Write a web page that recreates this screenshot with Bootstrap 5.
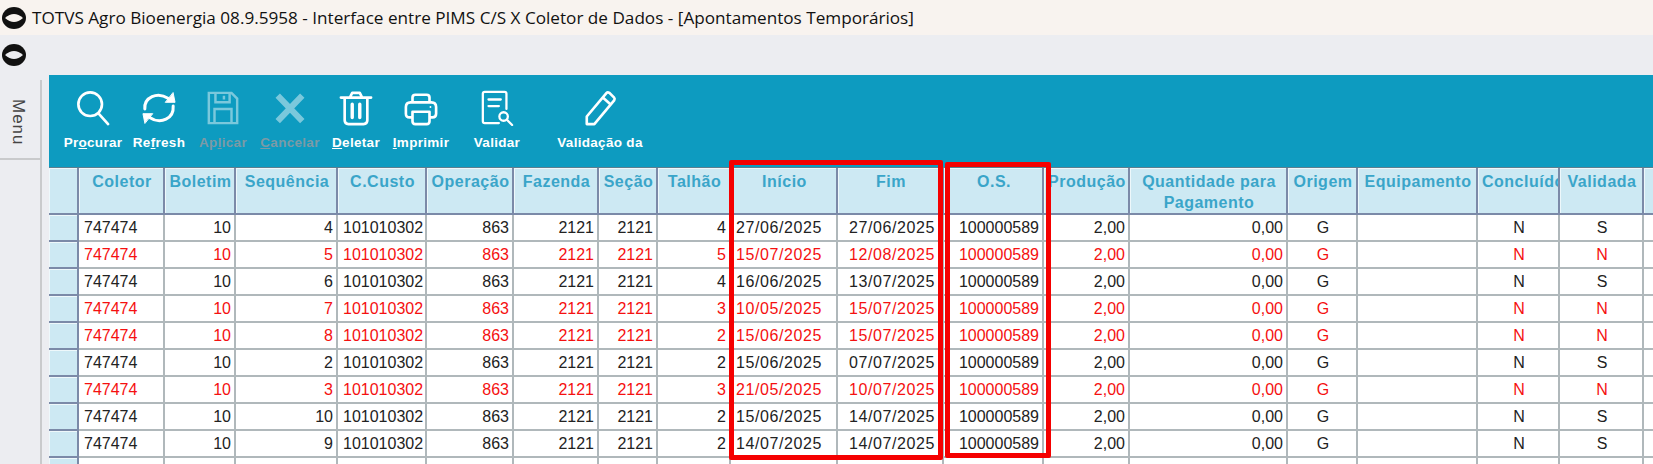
<!DOCTYPE html>
<html lang="pt-BR">
<head>
<meta charset="UTF-8">
<title>Apontamentos Temporários</title>
<link href="https://cdn.jsdelivr.net/npm/bootstrap@5.3.0/dist/css/bootstrap.min.css" rel="stylesheet">
<script src="https://cdn.jsdelivr.net/npm/bootstrap@5.3.0/dist/js/bootstrap.bundle.min.js"></script>
<style>
html, body { height: 464px; overflow: hidden; }
body { background: #ecedf1; font-family: "Liberation Sans", sans-serif; }
.app-frame { width: 1653px; height: 464px; position: relative; overflow: hidden; }
.title-bar { height: 35px; background: #f8f3ef; padding-left: 2px; gap: 6px; }
.title-text { font-family: "Open Sans", sans-serif; font-size: 17.15px; color: #111; white-space: nowrap; }
.sub-bar { height: 40px; padding-left: 2px; }
.work-area { height: 389px; }
.side-tab { width: 49px; flex: none; }
.side-inner { width: 42px; height: 80px; padding-right: 4px; border-right: 2px solid #c9cacc; border-bottom: 2px solid #c9cacc; margin-top: 5px; }
.side-label { writing-mode: vertical-rl; font-size: 17px; color: #444; letter-spacing: 1px; margin-top: 19px; }
.side-line { width: 42px; border-right: 2px solid #c9cacc; flex: 1; }
.main-col { width: 1604px; flex: none; }
.tool-strip { height: 93px; background: #0d9bc0; border-bottom: 1px solid #5d7f8f; padding-left: 11px; }
.tool-btn { flex: none; color: #fff; font-size: 13.5px; letter-spacing: .3px; font-weight: 700; line-height: 18px; text-align: center; white-space: nowrap; padding-top: 15px; }
.tool-btn svg { display: block; margin: 0 auto 8px; }
.tool-btn.off { color: #7b9aa6; }
.tool-btn.off svg { opacity: .45; }
.w-procurar { width: 66px; }
.w-refresh { width: 66px; }
.w-aplicar { width: 62px; }
.w-cancelar { width: 72px; }
.w-deletar { width: 60px; }
.w-imprimir { width: 70px; }
.w-validar { width: 82px; }
.w-validacao { width: 124px; }
.grid-wrap { overflow: hidden; }
.grid-tbl { table-layout: fixed; width: 1651px; margin: 0; border-collapse: separate; border-spacing: 0; }
.grid-tbl th { height: 47px; padding: 3px 2px 0 4px; background: #cde9f3; color: #3aa5c9; font-weight: 700; font-size: 16px; letter-spacing: .5px; line-height: 21px; text-align: center; vertical-align: top; border: 0; border-right: 2px solid #7b8aa8; border-bottom: 2px solid #7b8aa8; box-shadow: inset 1px 1px 0 #eef8fb; white-space: nowrap; overflow: hidden; }
.grid-tbl th.wrap-head { white-space: normal; }
.grid-tbl td { height: 27px; padding: 0 3px 0 5px; background: #fff; color: #222; font-size: 16px; line-height: 25px; border: 0; border-right: 2px solid #b0b8bb; border-bottom: 2px solid #b0b8bb; white-space: nowrap; overflow: hidden; }
.grid-tbl tr.bad td { color: #f51010; }
.grid-tbl td.ind { background: #cde9f3; border-right-color: #7b8aa8; border-bottom-color: #7b8aa8; box-shadow: inset 1px 1px 0 #eef8fb; padding: 0; }
.grid-tbl td.dt { letter-spacing: .6px; }
.grid-tbl td.dt.text-end { padding-right: 7px; }
.red-box { position: absolute; border: 5px solid #f50000; border-radius: 2px; pointer-events: none; }
.box-dates { left: 729px; top: 160px; width: 214px; height: 300px; }
.box-os { left: 945px; top: 162px; width: 106px; height: 296px; }
</style>
</head>
<body>
<div class="app-frame">
  <div class="title-bar d-flex align-items-center">
    <svg width="24" height="22" viewBox="0 0 24 22"><ellipse cx="12" cy="11" rx="12" ry="11" fill="#111"/><path d="M3 11Q12 3 21 11Q12 19 3 11Z" fill="#f8f3ef"/></svg>
    <span class="title-text">TOTVS Agro Bioenergia 08.9.5958 - Interface entre PIMS C/S X Coletor de Dados - [Apontamentos Temporários]</span>
  </div>
  <div class="sub-bar d-flex align-items-center">
    <svg width="24" height="22" viewBox="0 0 24 22"><ellipse cx="12" cy="11" rx="12" ry="11" fill="#111"/><path d="M3 11Q12 3 21 11Q12 19 3 11Z" fill="#ecedf1"/></svg>
  </div>
  <div class="work-area d-flex">
    <div class="side-tab d-flex flex-column">
      <div class="side-inner d-flex justify-content-center"><span class="side-label">Menu</span></div>
      <div class="side-line"></div>
    </div>
    <div class="main-col">
      <div class="tool-strip d-flex">
        <div class="tool-btn w-procurar"><svg width="34" height="36" viewBox="0 0 36 38" fill="none" stroke="#fff" stroke-width="2.8" stroke-linecap="round"><circle cx="15" cy="15" r="12.5"/><path d="M24 25 34 36"/></svg>Pr<u>o</u>curar</div>
        <div class="tool-btn w-refresh"><svg width="34" height="36" viewBox="0 0 36 38" fill="none" stroke="#fff" stroke-width="3.2" stroke-linecap="round"><path d="M3 20C2 8 16 1 28 9"/><path d="M33 17C34 30 20 37 8 29"/><path d="M25 13 35 13 33 3Z" fill="#fff" stroke-width="1"/><path d="M11 25 1 25 3 35Z" fill="#fff" stroke-width="1"/></svg>Re<u>f</u>resh</div>
        <div class="tool-btn off w-aplicar"><svg width="34" height="36" viewBox="0 0 36 38" fill="none" stroke="#fff" stroke-width="2.6"><path d="M3 3H27L33 9V35H3Z"/><path d="M10 3V13H25V3M19 6V10M9 35V20H27V35"/></svg>Ap<u>l</u>icar</div>
        <div class="tool-btn off w-cancelar"><svg width="34" height="36" viewBox="0 0 36 38" fill="none" stroke="#fff" stroke-width="6.5"><path d="M5 6 31 33M31 6 5 33"/></svg><u>C</u>ancelar</div>
        <div class="tool-btn w-deletar"><svg width="34" height="36" viewBox="0 0 36 38" fill="none" stroke="#fff" stroke-width="2.8" stroke-linecap="round" stroke-linejoin="round"><path d="M2 8H34M12 7 14 3H22L24 7M6 9V32Q6 36 10 36H26Q30 36 30 32V9"/><path d="M14 15V29M22 15V29" stroke-width="3.6"/></svg><u>D</u>eletar</div>
        <div class="tool-btn w-imprimir"><svg width="34" height="36" viewBox="0 0 36 38" fill="none" stroke="#fff" stroke-width="2.8" stroke-linejoin="round"><path d="M9 13V8Q9 5 12 5H24Q27 5 27 8V13"/><path d="M9 29H6Q2 29 2 25V18Q2 13 7 13H29Q34 13 34 18V25Q34 29 30 29H27"/><path d="M9 23H27V33Q27 36 24 36H12Q9 36 9 33Z"/><circle cx="28" cy="18" r="1" fill="#fff" stroke="none"/></svg><u>I</u>mprimir</div>
        <div class="tool-btn w-validar"><svg width="34" height="36" viewBox="0 0 36 38" fill="none" stroke="#fff" stroke-width="2.4" stroke-linecap="round" stroke-linejoin="round"><path d="M20 35H5Q3 35 3 33V4Q3 2 5 2H26Q28 2 28 4V20"/><path d="M9 10H22M9 17H20"/><circle cx="25" cy="28" r="4.5"/><path d="M29 32 34 37"/></svg>Validar</div>
        <div class="tool-btn w-validacao"><svg width="34" height="36" viewBox="0 0 36 38" fill="none" stroke="#fff" stroke-width="2.8" stroke-linejoin="round"><path d="M4 28 25 3Q26 2 28 3L33 8Q34 9 33 11L12 36H4Z"/><path d="M21 8 29 15"/></svg>Validação da</div>
      </div>
      <div class="grid-wrap">
        <table class="grid-tbl">
          <colgroup id="grid-cols"></colgroup>
          <thead><tr id="grid-head"></tr></thead>
          <tbody id="grid-body"></tbody>
        </table>
      </div>
    </div>
  </div>
  <div class="red-box box-dates"></div>
  <div class="red-box box-os"></div>
</div>
<script>
  // right edge of each column on the page
  const edges = [49, 79, 165, 236, 338, 427, 514, 599, 658, 731, 838, 944, 1044, 1130, 1288, 1358, 1478, 1560, 1644, 1700];
  const heads = ['', 'Coletor', 'Boletim', 'Sequência', 'C.Custo', 'Operação', 'Fazenda', 'Seção', 'Talhão', 'Início', 'Fim', 'O.S.', 'Produção', 'Quantidade para Pagamento', 'Origem', 'Equipamento', 'Concluído', 'Validada', ''];
  const rows = [
    [4, 863, 4, '27/06/2025', '27/06/2025', 'S', 0],
    [5, 863, 5, '15/07/2025', '12/08/2025', 'N', 1],
    [6, 863, 4, '16/06/2025', '13/07/2025', 'S', 0],
    [7, 863, 3, '10/05/2025', '15/07/2025', 'N', 1],
    [8, 863, 2, '15/06/2025', '15/07/2025', 'N', 1],
    [2, 863, 2, '15/06/2025', '07/07/2025', 'S', 0],
    [3, 863, 3, '21/05/2025', '10/07/2025', 'N', 1],
    [10, 863, 2, '15/06/2025', '14/07/2025', 'S', 0],
    [9, 863, 2, '14/07/2025', '14/07/2025', 'S', 0],
    [11, 863, 2, '14/07/2025', '14/07/2025', 'S', 0]
  ];

  let colsHtml = '';
  for (let i = 1; i < edges.length; i++) colsHtml += `<col style="width:${edges[i] - edges[i - 1]}px">`;
  document.getElementById('grid-cols').innerHTML = colsHtml;

  document.getElementById('grid-head').innerHTML = heads.map(h =>
    `<th class="${h.includes(' ') ? 'wrap-head' : ''}">${h}</th>`).join('');

  document.getElementById('grid-body').innerHTML = rows.map(r => `
    <tr class="${r[6] ? 'bad' : ''}">
      <td class="ind"></td>
      <td>747474</td>
      <td class="text-end">10</td>
      <td class="text-end">${r[0]}</td>
      <td>101010302</td>
      <td class="text-end">${r[1]}</td>
      <td class="text-end">2121</td>
      <td class="text-end">2121</td>
      <td class="text-end">${r[2]}</td>
      <td class="dt">${r[3]}</td>
      <td class="dt text-end">${r[4]}</td>
      <td class="text-end">100000589</td>
      <td class="text-end">2,00</td>
      <td class="text-end">0,00</td>
      <td class="text-center">G</td>
      <td></td>
      <td class="text-center">N</td>
      <td class="text-center">${r[5]}</td>
      <td></td>
    </tr>`).join('');
</script>
</body>
</html>
